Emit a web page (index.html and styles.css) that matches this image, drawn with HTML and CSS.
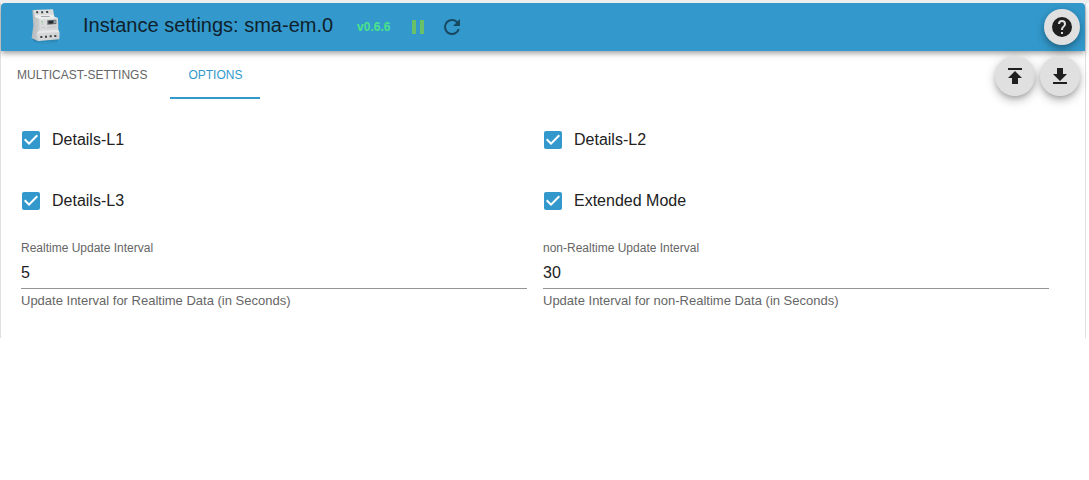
FILE: index.html
```html
<!DOCTYPE html>
<html lang="en">
<head>
<meta charset="utf-8">
<meta name="viewport" content="width=device-width, initial-scale=1">
<title>Instance settings: sma-em.0</title>
<link rel="stylesheet" href="styles.css">
</head>
<body>
<svg class="sprite" aria-hidden="true">
  <symbol id="check" viewBox="0 0 24 24"><path fill="#3399cc" d="M5 3h14a2 2 0 0 1 2 2v14a2 2 0 0 1-2 2H5a2 2 0 0 1-2-2V5a2 2 0 0 1 2-2z"/><path fill="#fff" d="M10 17l-5-5 1.410-1.410L10 14.170l7.590-7.590L19 8z"/></symbol>
</svg>
<main class="panel">
  <header class="header">
    <svg class="logo" viewBox="0 0 108 126" role="img" aria-label="Energy meter">
      <defs>
        <linearGradient id="front" x1="0" y1="0" x2="1" y2="1"><stop offset="0" stop-color="#e0e2e2"/><stop offset="1" stop-color="#cfd1d2"/></linearGradient>
        <linearGradient id="side" x1="0" y1="0" x2="1" y2="0"><stop offset="0" stop-color="#b4b9bb"/><stop offset="1" stop-color="#cfd1d2"/></linearGradient>
        <linearGradient id="mirror" x1="0" y1="0" x2="0" y2="1"><stop offset="0" stop-color="#1d5c80" stop-opacity=".7"/><stop offset="1" stop-color="#3399cc" stop-opacity="0"/></linearGradient>
      </defs>
      <path fill="url(#mirror)" d="M16 96l18 8 60-5-6 14-50 6-18-10z"/>
      <path fill="url(#side)" d="M16 13l20-2 6 24v68l-9 2-19-8 3-24 2-14z"/>
      <path fill="url(#front)" d="M20 12l58-2 4 22 11 4 1 36 4 8-1 20-64 5-4-24 9-10-1-34-13-5z"/>
      <path fill="#eceded" d="M24 28l56-2 2 7 10 4-53 3-14-6z"/>
      <path fill="#e6e7e7" d="M37 74l56-3 4 7-66 4z"/>
      <path fill="#3c4245" d="M27 16h6l1 6h-6zM42 16h6l1 6h-6zM57 15h6l1 6h-6z"/>
      <path fill="#8b9194" d="M42 31l26-1v2l-26 1z"/>
      <path fill="#5f676b" d="M61 43l27-2v13l-27 2z"/>
      <path fill="#262d32" d="M65 45l13-1v8l-13 1z"/>
      <path fill="#a2a9ac" d="M81 44l5-1v8l-5 1z"/>
      <path fill="#6fc587" d="M43 46h5v3h-5zM43 53h5v2h-5z"/>
      <path fill="#bfc3c4" d="M42 64l11-1v2l-11 1zM61 63l27-2v2l-27 2z"/>
      <path fill="#3c4245" d="M40 90h6v6h-6zM54 89h6v6h-6zM68 88h6v6h-6zM82 87h6v6h-6z"/>
    </svg>
    <h1 class="title">Instance settings: sma-em.0</h1>
    <span class="version">v0.6.6</span>
    <button class="tool pause" type="button" aria-label="Pause instance"><svg viewBox="0 0 24 24"><path d="M6 19h4V5H6zm8-14v14h4V5z"/></svg></button>
    <button class="tool refresh" type="button" aria-label="Restart instance"><svg viewBox="0 0 24 24"><path d="M17.650 6.350A7.950 7.950 0 0 0 12 4a8 8 0 1 0 7.730 10h-2.080A6 6 0 1 1 12 6c1.660 0 3.140.690 4.220 1.780L13 11h7V4z"/></svg></button>
    <button class="fab help" type="button" aria-label="Help"><svg viewBox="0 0 24 24"><path d="M12 2a10 10 0 1 0 0 20 10 10 0 0 0 0-20zm1 17h-2v-2h2zm2.070-7.750l-.9.920C13.450 12.900 13 13.500 13 15h-2v-.5c0-1.100.450-2.100 1.170-2.830l1.240-1.260c.370-.360.590-.860.590-1.410a2 2 0 0 0-4 0H8a4 4 0 0 1 8 0c0 .880-.360 1.680-.930 2.250z"/></svg></button>
  </header>
  <div class="bar">
    <nav class="tabs" role="tablist">
      <button class="tab" type="button" role="tab" aria-selected="false">MULTICAST-SETTINGS</button>
      <button class="tab selected" type="button" role="tab" aria-selected="true">OPTIONS</button>
    </nav>
    <div class="actions">
      <button class="fab" type="button" aria-label="Load configuration from file"><svg viewBox="0 0 24 24"><path d="M5 4v2h14V4zm0 10h4v6h6v-6h4l-7-7z"/></svg></button>
      <button class="fab" type="button" aria-label="Save configuration to file"><svg viewBox="0 0 24 24"><path d="M5 20h14v-2H5zM19 10h-4V4H9v6H5l7 7z"/></svg></button>
    </div>
  </div>
  <form class="options">
    <label class="option"><span class="tick"><input type="checkbox" checked><svg><use href="#check"/></svg></span>Details-L1</label>
    <label class="option"><span class="tick"><input type="checkbox" checked><svg><use href="#check"/></svg></span>Details-L2</label>
    <label class="option"><span class="tick"><input type="checkbox" checked><svg><use href="#check"/></svg></span>Details-L3</label>
    <label class="option"><span class="tick"><input type="checkbox" checked><svg><use href="#check"/></svg></span>Extended Mode</label>
    <div class="field">
      <label for="realtime">Realtime Update Interval</label>
      <input id="realtime" type="text" inputmode="numeric" value="5" aria-describedby="realtime-help">
      <p id="realtime-help">Update Interval for Realtime Data (in Seconds)</p>
    </div>
    <div class="field">
      <label for="nonrealtime">non-Realtime Update Interval</label>
      <input id="nonrealtime" type="text" inputmode="numeric" value="30" aria-describedby="nonrealtime-help">
      <p id="nonrealtime-help">Update Interval for non-Realtime Data (in Seconds)</p>
    </div>
  </form>
</main>
</body>
</html>
```

FILE: styles.css
```css
* { box-sizing: border-box; }
body {
  margin: 0;
  border-top: 3px solid #eeeeee;
  background: #fff;
  color: #212121;
  font: 16px/24px "Liberation Sans", Arial, sans-serif;
}
button, input { font: inherit; }
button { padding: 0; border: 0; background: none; cursor: pointer; }
svg { display: block; }
.sprite { position: absolute; width: 0; height: 0; }
.panel {
  margin-right: 3px;
  padding-bottom: 28px;
  border: solid #e0e0e0;
  border-width: 0 1px;
}
.header {
  display: flex;
  align-items: center;
  height: 48px;
  padding: 0 5px 0 26px;
  border-radius: 4px 4px 0 0;
  background: #3399cc;
  box-shadow: 0 2px 4px -1px #0003, 0 4px 5px #0002, 0 1px 10px #0002;
}
.logo { width: 36px; height: 42px; }
.title {
  margin: 0 24px 0 20px;
  padding-bottom: 4px;
  color: #10212b;
  font-size: 20px;
  font-weight: 400;
  line-height: 32px;
}
.version { color: #4be38a; font-size: 12px; font-weight: 700; }
.tool svg { width: 24px; height: 24px; }
.pause { margin-left: 16px; }
.pause svg { fill: #6abf69; }
.refresh { margin-left: 10px; }
.refresh svg { fill: #174960; }
.fab {
  display: grid;
  place-items: center;
  width: 40px;
  height: 40px;
  border-radius: 50%;
  background: #e0e0e0;
  box-shadow: 0 3px 5px -1px #0003, 0 6px 10px #0002, 0 1px 12px #0002;
}
.fab svg { width: 24px; height: 24px; fill: #1f1f1f; }
.help { width: 36px; height: 36px; margin-left: auto; }
.bar { display: flex; justify-content: space-between; padding-right: 5px; }
.tabs { display: flex; }
.tab {
  min-width: 90px;
  height: 48px;
  padding: 2px 23px 0 16px;
  border-bottom: 2px solid transparent;
  color: #666;
  font-size: 12px;
}
.selected { padding: 2px 16px 0; border-color: #3399cc; color: #3399cc; }
.actions { display: flex; gap: 5px; padding-top: 5px; }
.options {
  display: grid;
  grid-template-columns: 1fr 1fr;
  gap: 19px 16px;
  padding: 20px 36px 0 20px;
}
.option { display: flex; align-items: center; gap: 9px; height: 42px; justify-self: start; }
.tick { display: grid; margin-left: -2px; }
.tick input, .tick svg { grid-area: 1 / 1; width: 24px; height: 24px; margin: 0; }
.tick input { border: 3px solid transparent; appearance: none; background: #fff; }
.tick svg { pointer-events: none; }
.tick input:not(:checked) { box-shadow: inset 0 0 0 2px #666; }
.tick input:not(:checked) + svg { visibility: hidden; }
.field { display: flex; flex-direction: column; color: #666; }
.field label { font-size: 12px; line-height: 14px; }
.field input {
  width: 100%;
  height: 34px;
  padding: 2px 0 0;
  border: 0;
  border-bottom: 1px solid #949494;
  background: none;
  color: #212121;
}
.field p { margin: 3px 0 0; font-size: 13px; line-height: 18px; }
```
